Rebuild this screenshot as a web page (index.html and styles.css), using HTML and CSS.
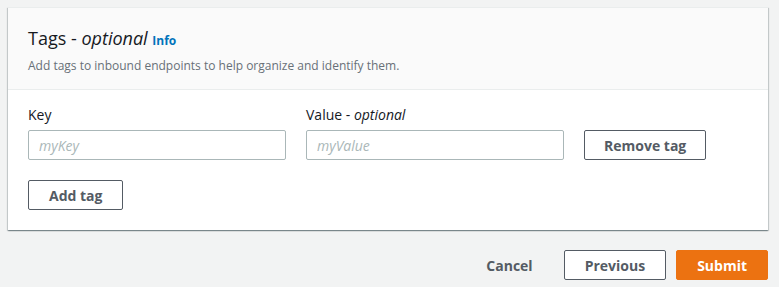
FILE: index.html
```html
<!DOCTYPE html>
<html lang="en">
<head>
    <meta charset="UTF-8">
    <meta name="viewport" content="width=device-width, initial-scale=1.0">
    <title>Create inbound endpoint - Tags</title>
    <link rel="stylesheet" href="styles.css">
</head>
<body>
    <div class="tags-panel">
        <div class="panel-header">
            <h2>Tags - <em>optional</em> <a class="info-link" href="#">Info</a></h2>
            <p>Add tags to inbound endpoints to help organize and identify them.</p>
        </div>

        <div class="panel-body">
            <div class="tag-row">
                <div class="field">
                    <label for="tagKey">Key</label>
                    <input type="text" id="tagKey" class="text-input" placeholder="myKey">
                </div>
                <div class="field">
                    <label for="tagValue">Value - <em>optional</em></label>
                    <input type="text" id="tagValue" class="text-input" placeholder="myValue">
                </div>
                <button type="button" class="btn">Remove tag</button>
            </div>

            <button type="button" class="btn">Add tag</button>
        </div>
    </div>

    <div class="form-actions">
        <button type="button" class="btn btn-link">Cancel</button>
        <button type="button" class="btn">Previous</button>
        <button type="button" class="btn btn-primary">Submit</button>
    </div>
</body>
</html>
```

FILE: styles.css
```css
* {
    margin: 0;
    padding: 0;
    box-sizing: border-box;
}

body {
    font-family: "Open Sans", "Noto Sans", sans-serif;
    background: #f2f3f3;
    color: #16191f;
    padding: 7px 11px 0 8px;
}

.tags-panel {
    background: white;
    border-top: 1px solid #eaeded;
    box-shadow: 0 1px 1px 0 rgba(0,28,36,0.3), 1px 1px 1px 0 rgba(0,28,36,0.15), -1px 1px 1px 0 rgba(0,28,36,0.15);
}

.panel-header {
    background: #fafafa;
    padding: 19px 20px 15px;
    border-bottom: 1px solid #eaeded;
}

.panel-header h2 {
    font-size: 18px;
    font-weight: normal;
    line-height: 22px;
}

.info-link {
    font-size: 12px;
    font-weight: bold;
    color: #0073bb;
    text-decoration: none;
}

.panel-header p {
    margin-top: 6px;
    font-size: 12px;
    line-height: 16px;
    color: #687078;
}

.panel-body {
    padding: 14px 20px 20px;
}

.tag-row {
    display: flex;
    align-items: flex-end;
    gap: 20px;
    margin-bottom: 20px;
}

.tag-row .btn {
    padding: 0 19px;
}

.field {
    display: flex;
    flex-direction: column;
    gap: 4px;
    width: 258px;
}

.field label {
    font-size: 14px;
    line-height: 22px;
}

.text-input {
    height: 30px;
    padding: 0 10px;
    border: 1px solid #aab7b8;
    border-radius: 2px;
    font-family: inherit;
    font-size: 14px;
    color: #16191f;
    outline: none;
}

.text-input::placeholder {
    color: #aab7b8;
    font-style: italic;
}

.btn {
    height: 30px;
    padding: 0 20px;
    background: white;
    border: 1px solid #545b64;
    border-radius: 2px;
    font-family: inherit;
    font-size: 14px;
    font-weight: bold;
    color: #545b64;
    cursor: pointer;
}

.btn:hover {
    background: #fafafa;
    color: #16191f;
}

.btn-link {
    border-color: transparent;
    background: transparent;
}

.btn-primary {
    background: #ec7211;
    border-color: #ec7211;
    color: white;
}

.btn-primary:hover {
    background: #eb5f07;
    color: white;
}

.form-actions {
    display: flex;
    justify-content: flex-end;
    gap: 10px;
    margin-top: 20px;
}
```
